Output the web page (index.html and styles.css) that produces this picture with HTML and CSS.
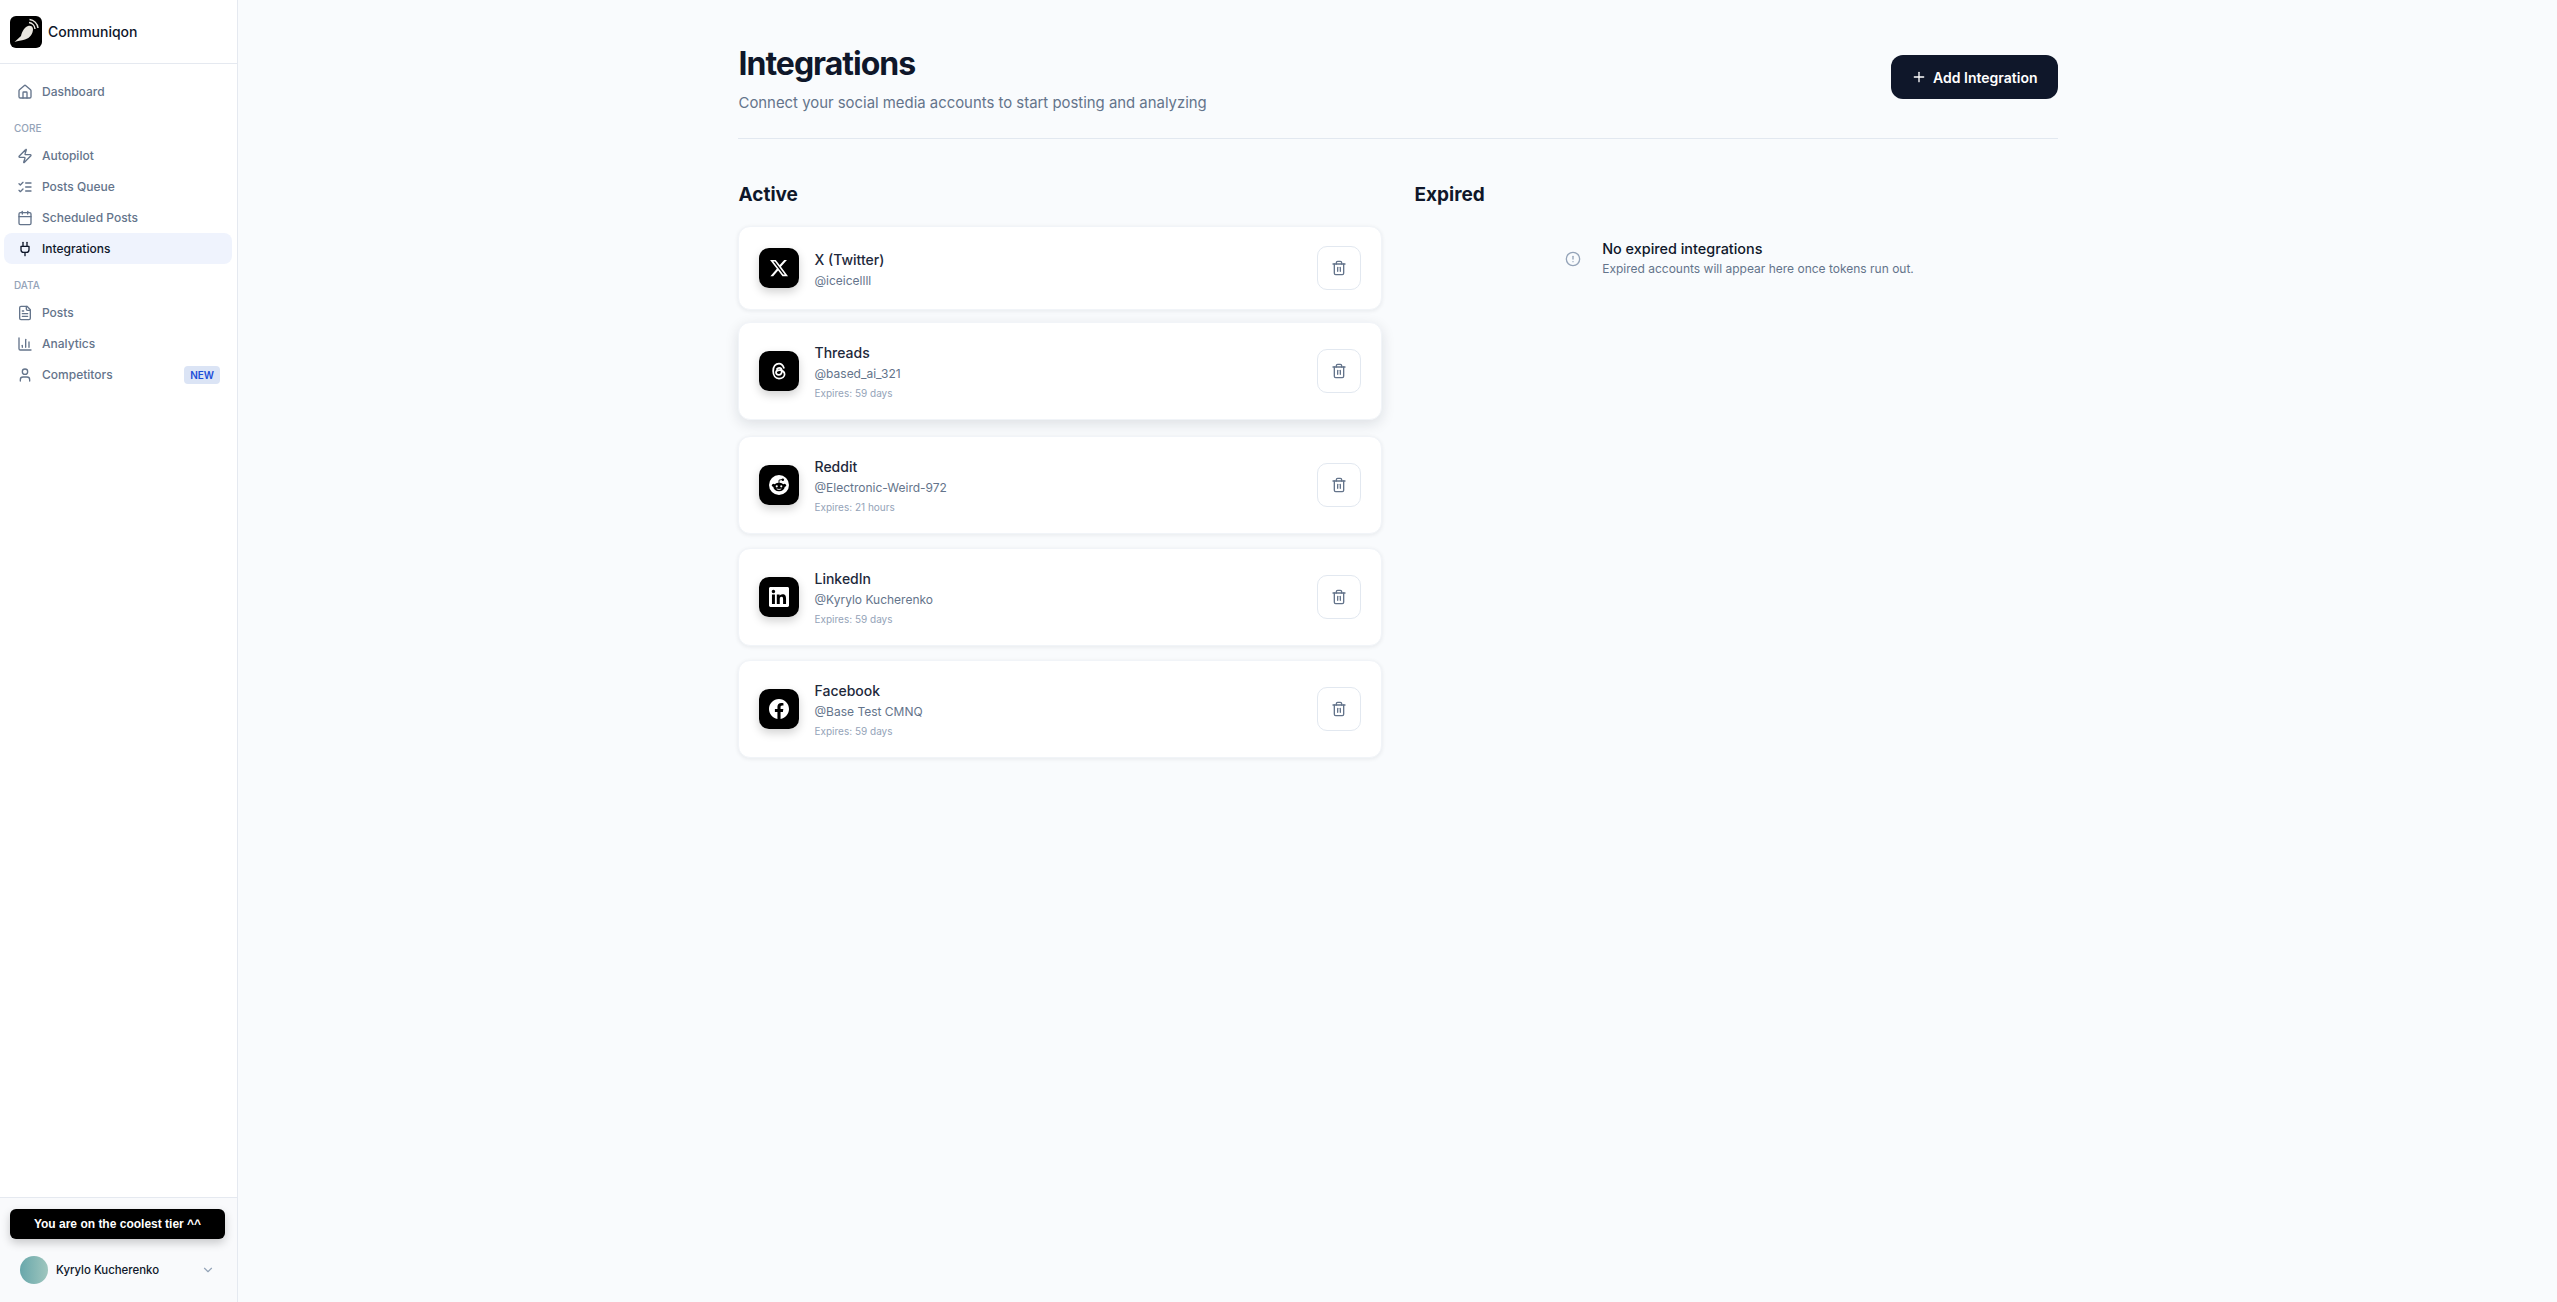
FILE: index.html
```html
<!DOCTYPE html>
<html lang="en">
  <head>
    <meta charset="UTF-8" />
    <meta name="viewport" content="width=device-width, initial-scale=1.0" />
    <title>Integrations</title>
    <link rel="stylesheet" href="styles.css">
  </head>
  <body>
    <aside class="sidebar">
      <div class="brand">
        <span class="brand-logo">
          <svg viewBox="0 0 32 32" width="32" height="32" fill="none">
            <path d="M4.5 26 L11 20 C12 15 15 11 18 10 C20 9 23 10 23 13 C23 18 20 22 15 23.5 C11 24.5 8 25 4.5 26 Z" fill="#e9e6df" />
            <path d="M19 6.5 A7 7 0 0 1 25 13 M19.5 3.5 A10 10 0 0 1 28 12" stroke="#e9e6df" stroke-width="1.5" />
          </svg>
        </span>
        <span class="brand-name">Communiqon</span>
      </div>

      <nav class="nav">
        <a class="nav-item">
          <svg class="icon" viewBox="0 0 24 24"><path d="M15 21v-8a1 1 0 0 0-1-1h-4a1 1 0 0 0-1 1v8" /><path d="M3 10a2 2 0 0 1 .709-1.528l7-5.999a2 2 0 0 1 2.582 0l7 5.999A2 2 0 0 1 21 10v9a2 2 0 0 1-2 2H5a2 2 0 0 1-2-2z" /></svg>
          Dashboard
        </a>

        <div class="nav-label">CORE</div>
        <a class="nav-item">
          <svg class="icon" viewBox="0 0 24 24"><path d="M4 14a1 1 0 0 1-.78-1.63l9.9-10.2a.5.5 0 0 1 .86.46l-1.92 6.02A1 1 0 0 0 13 10h7a1 1 0 0 1 .78 1.63l-9.9 10.2a.5.5 0 0 1-.86-.46l1.92-6.02A1 1 0 0 0 11 14z" /></svg>
          Autopilot
        </a>
        <a class="nav-item">
          <svg class="icon" viewBox="0 0 24 24"><path d="M3 7l2 2 4-4" /><path d="M3 17l2 2 4-4" /><path d="M13 6h8" /><path d="M13 12h8" /><path d="M13 18h8" /></svg>
          Posts Queue
        </a>
        <a class="nav-item">
          <svg class="icon" viewBox="0 0 24 24"><path d="M8 2v4" /><path d="M16 2v4" /><rect width="18" height="18" x="3" y="4" rx="2" /><path d="M3 10h18" /></svg>
          Scheduled Posts
        </a>
        <a class="nav-item nav-item-active">
          <svg class="icon" viewBox="0 0 24 24"><path d="M12 22v-5" /><path d="M9 8V2" /><path d="M15 8V2" /><path d="M18 8v5a4 4 0 0 1-4 4h-4a4 4 0 0 1-4-4V8Z" /></svg>
          Integrations
        </a>

        <div class="nav-label">DATA</div>
        <a class="nav-item">
          <svg class="icon" viewBox="0 0 24 24"><path d="M15 2H6a2 2 0 0 0-2 2v16a2 2 0 0 0 2 2h12a2 2 0 0 0 2-2V7Z" /><path d="M14 2v4a2 2 0 0 0 2 2h4" /><path d="M10 9H8" /><path d="M16 13H8" /><path d="M16 17H8" /></svg>
          Posts
        </a>
        <a class="nav-item">
          <svg class="icon" viewBox="0 0 24 24"><path d="M3 3v16a2 2 0 0 0 2 2h16" /><path d="M18 17V9" /><path d="M13 17V5" /><path d="M8 17v-3" /></svg>
          Analytics
        </a>
        <a class="nav-item">
          <svg class="icon" viewBox="0 0 24 24"><path d="M19 21v-2a4 4 0 0 0-4-4H9a4 4 0 0 0-4 4v2" /><circle cx="12" cy="7" r="4" /></svg>
          Competitors
          <span class="badge">NEW</span>
        </a>
      </nav>

      <div class="sidebar-footer">
        <div class="tier">You are on the coolest tier ^^</div>
        <div class="user">
          <span class="avatar"></span>
          <span class="user-name">Kyrylo Kucherenko</span>
          <svg class="chevron" viewBox="0 0 24 24"><path d="m6 9 6 6 6-6" /></svg>
        </div>
      </div>
    </aside>

    <main class="main">
      <div class="content">
        <header class="page-header">
          <div>
            <h1>Integrations</h1>
            <p class="subtitle">Connect your social media accounts to start posting and analyzing</p>
          </div>
          <button class="add-button">
            <svg class="plus" viewBox="0 0 24 24"><path d="M5 12h14" /><path d="M12 5v14" /></svg>
            Add Integration
          </button>
        </header>

        <div class="columns">
          <section>
            <h2>Active</h2>
            <div class="card-list">
              <div class="card">
                <span class="platform">
                  <svg viewBox="0 0 24 24" width="20" height="20" fill="#fff"><path d="M18.244 2.25h3.308l-7.227 8.26 8.502 11.24H16.17l-5.214-6.817L4.99 21.75H1.68l7.73-8.835L1.254 2.25H8.08l4.713 6.231zm-1.161 17.52h1.833L7.084 4.126H5.117z" /></svg>
                </span>
                <div class="card-text">
                  <div class="card-name">X (Twitter)</div>
                  <div class="card-handle">@iceicellll</div>
                </div>
                <button class="delete">
                  <svg class="icon" viewBox="0 0 24 24"><path d="M3 6h18" /><path d="M19 6v14a2 2 0 0 1-2 2H7a2 2 0 0 1-2-2V6" /><path d="M8 6V4a2 2 0 0 1 2-2h4a2 2 0 0 1 2 2v2" /><path d="M10 11v6" /><path d="M14 11v6" /></svg>
                </button>
              </div>

              <div class="card card-hover">
                <span class="platform">
                  <svg viewBox="0 0 24 24" width="20" height="20" fill="none" stroke="#fff" stroke-width="2.1" stroke-linecap="round"><path d="M17.8 8.2C16.8 5 14.7 3 12 3 7.8 3 5 6.5 5 12s2.8 9 7 9c3.8 0 6.7-2.2 6.7-5.2 0-3-2.7-4.8-6.2-4.8-2.5 0-4.1 1.2-4.1 2.9 0 1.6 1.4 2.7 3.2 2.7 2.4 0 3.8-1.7 3.8-4.6 0-2.3-1.3-3.7-3.2-3.7-1.2 0-2.1.5-2.7 1.4" /></svg>
                </span>
                <div class="card-text">
                  <div class="card-name">Threads</div>
                  <div class="card-handle">@based_ai_321</div>
                  <div class="card-expires">Expires: 59 days</div>
                </div>
                <button class="delete">
                  <svg class="icon" viewBox="0 0 24 24"><path d="M3 6h18" /><path d="M19 6v14a2 2 0 0 1-2 2H7a2 2 0 0 1-2-2V6" /><path d="M8 6V4a2 2 0 0 1 2-2h4a2 2 0 0 1 2 2v2" /><path d="M10 11v6" /><path d="M14 11v6" /></svg>
                </button>
              </div>

              <div class="card">
                <span class="platform">
                  <svg viewBox="0 0 24 24" width="20" height="20">
                    <circle cx="12" cy="12" r="12" fill="#fff" />
                    <circle cx="5.4" cy="12.4" r="1.9" fill="#000" />
                    <circle cx="18.6" cy="12.4" r="1.9" fill="#000" />
                    <ellipse cx="12" cy="14.4" rx="6.8" ry="5" fill="#000" />
                    <circle cx="9.3" cy="13.6" r="1.3" fill="#fff" />
                    <circle cx="14.7" cy="13.6" r="1.3" fill="#fff" />
                    <path d="M9.3 16.6c1.6 1 3.8 1 5.4 0" stroke="#fff" stroke-width="1" fill="none" />
                    <path d="M12 10V6.2l3.6-.8" stroke="#000" stroke-width="1.1" fill="none" />
                    <circle cx="16.6" cy="5.6" r="1.5" fill="#000" />
                  </svg>
                </span>
                <div class="card-text">
                  <div class="card-name">Reddit</div>
                  <div class="card-handle">@Electronic-Weird-972</div>
                  <div class="card-expires">Expires: 21 hours</div>
                </div>
                <button class="delete">
                  <svg class="icon" viewBox="0 0 24 24"><path d="M3 6h18" /><path d="M19 6v14a2 2 0 0 1-2 2H7a2 2 0 0 1-2-2V6" /><path d="M8 6V4a2 2 0 0 1 2-2h4a2 2 0 0 1 2 2v2" /><path d="M10 11v6" /><path d="M14 11v6" /></svg>
                </button>
              </div>

              <div class="card">
                <span class="platform">
                  <svg viewBox="0 0 24 24" width="20" height="20" fill="#fff"><path d="M20.447 20.452h-3.554v-5.569c0-1.328-.027-3.037-1.852-3.037-1.853 0-2.136 1.445-2.136 2.939v5.667H9.351V9h3.414v1.561h.046c.477-.9 1.637-1.85 3.37-1.85 3.601 0 4.267 2.37 4.267 5.455v6.286zM5.337 7.433c-1.144 0-2.063-.926-2.063-2.065 0-1.138.92-2.063 2.063-2.063 1.14 0 2.064.925 2.064 2.063 0 1.139-.925 2.065-2.064 2.065zm1.782 13.019H3.555V9h3.564v11.452zM22.225 0H1.771C.792 0 0 .774 0 1.729v20.542C0 23.227.792 24 1.771 24h20.451C23.2 24 24 23.227 24 22.271V1.729C24 .774 23.2 0 22.222 0h.003z" /></svg>
                </span>
                <div class="card-text">
                  <div class="card-name">LinkedIn</div>
                  <div class="card-handle">@Kyrylo Kucherenko</div>
                  <div class="card-expires">Expires: 59 days</div>
                </div>
                <button class="delete">
                  <svg class="icon" viewBox="0 0 24 24"><path d="M3 6h18" /><path d="M19 6v14a2 2 0 0 1-2 2H7a2 2 0 0 1-2-2V6" /><path d="M8 6V4a2 2 0 0 1 2-2h4a2 2 0 0 1 2 2v2" /><path d="M10 11v6" /><path d="M14 11v6" /></svg>
                </button>
              </div>

              <div class="card">
                <span class="platform">
                  <svg viewBox="0 0 24 24" width="20" height="20" fill="#fff"><path d="M24 12.073c0-6.627-5.373-12-12-12s-12 5.373-12 12c0 5.99 4.388 10.954 10.125 11.854v-8.385H7.078v-3.47h3.047V9.43c0-3.007 1.792-4.669 4.533-4.669 1.312 0 2.686.235 2.686.235v2.953H15.83c-1.491 0-1.956.925-1.956 1.874v2.25h3.328l-.532 3.47h-2.796v8.385C19.612 23.027 24 18.062 24 12.073z" /></svg>
                </span>
                <div class="card-text">
                  <div class="card-name">Facebook</div>
                  <div class="card-handle">@Base Test CMNQ</div>
                  <div class="card-expires">Expires: 59 days</div>
                </div>
                <button class="delete">
                  <svg class="icon" viewBox="0 0 24 24"><path d="M3 6h18" /><path d="M19 6v14a2 2 0 0 1-2 2H7a2 2 0 0 1-2-2V6" /><path d="M8 6V4a2 2 0 0 1 2-2h4a2 2 0 0 1 2 2v2" /><path d="M10 11v6" /><path d="M14 11v6" /></svg>
                </button>
              </div>
            </div>
          </section>

          <section>
            <h2>Expired</h2>
            <div class="empty">
              <span class="empty-icon">
                <svg viewBox="0 0 24 24"><circle cx="12" cy="12" r="10" /><path d="M12 8v4" /><path d="M12 16h.01" /></svg>
              </span>
              <div>
                <div class="empty-title">No expired integrations</div>
                <div class="empty-text">Expired accounts will appear here once tokens run out.</div>
              </div>
            </div>
          </section>
        </div>
      </div>
    </main>
  </body>
</html>
```

FILE: styles.css
```css
* {
  box-sizing: border-box;
}
body {
  margin: 0;
  height: 100vh;
  display: flex;
  overflow: hidden;
  background-color: #f9fbfd;
  color: #0f172a;
  font-family: Inter, "Noto Sans", sans-serif;
}
svg {
  display: block;
}

/* sidebar */
.sidebar {
  width: 238px;
  flex-shrink: 0;
  display: flex;
  flex-direction: column;
  background-color: #fff;
  border-right: 1px solid #e5e9f0;
}
.brand {
  height: 64px;
  display: flex;
  align-items: center;
  gap: 6px;
  padding: 0 10px;
  border-bottom: 1px solid #e5e9f0;
}
.brand-logo {
  width: 32px;
  height: 32px;
  border-radius: 6px;
  background-color: #000;
}
.brand-name {
  font-size: 14px;
  font-weight: 500;
}
.nav {
  flex: 1;
  padding: 12px 5px 0 4px;
}
.nav-item {
  height: 31px;
  display: flex;
  align-items: center;
  gap: 9px;
  padding: 0 13px;
  border-radius: 8px;
  font-size: 12px;
  font-weight: 500;
  color: #64748b;
}
.nav-item-active {
  background-color: #eff3fd;
  color: #0f172a;
}
.nav-label {
  height: 33px;
  padding: 13px 10px 0;
  font-size: 10px;
  font-weight: 500;
  line-height: 16px;
  color: #94a3b8;
}
.icon {
  width: 16px;
  height: 16px;
  flex-shrink: 0;
  fill: none;
  stroke: currentColor;
  stroke-width: 2;
  stroke-linecap: round;
  stroke-linejoin: round;
}
.badge {
  margin-left: auto;
  margin-right: -1px;
  padding: 0 6px;
  height: 18px;
  line-height: 18px;
  border-radius: 4px;
  background-color: #dbe4f5;
  color: #1d4ed8;
  font-size: 10px;
  font-weight: 600;
}
.sidebar-footer {
  height: 105px;
  padding: 11px 12px 0 10px;
  background-color: #f9fafc;
  border-top: 1px solid #e5e9f0;
}
.tier {
  height: 30px;
  line-height: 30px;
  border-radius: 6px;
  background-color: #000;
  box-shadow: 0 4px 10px rgba(0, 0, 0, 0.2);
  color: #fff;
  text-align: center;
  font-family: "Liberation Sans", sans-serif;
  font-size: 12px;
  font-weight: 700;
}
.user {
  display: flex;
  align-items: center;
  gap: 8px;
  margin-top: 17px;
  padding: 0 10px;
}
.avatar {
  width: 28px;
  height: 28px;
  border-radius: 50%;
  background: linear-gradient(90deg, #68a7ab, #9fc6be);
}
.user-name {
  font-size: 11.4px;
  font-weight: 500;
}
.chevron {
  width: 14px;
  height: 14px;
  margin-left: auto;
  fill: none;
  stroke: #94a3b8;
  stroke-width: 2;
  stroke-linecap: round;
  stroke-linejoin: round;
}

/* main */
.main {
  flex: 1;
}
.content {
  width: 1320px;
  margin: 0 auto;
}
.page-header {
  height: 139px;
  display: flex;
  justify-content: space-between;
  padding-top: 42px;
  padding-left: 1px;
  border-bottom: 1px solid #e2e8f0;
}
h1 {
  margin: 0;
  font-size: 32px;
  font-weight: 700;
  line-height: 44px;
  letter-spacing: -1px;
}
.subtitle {
  margin: 5px 0 0;
  font-size: 14.9px;
  line-height: 24px;
  color: #64748b;
}
.add-button {
  height: 44px;
  margin-top: 13px;
  padding: 0 20px;
  display: flex;
  align-items: center;
  gap: 6px;
  border: none;
  border-radius: 12px;
  background-color: #0f172a;
  color: #fff;
  font-family: inherit;
  font-size: 14px;
  font-weight: 600;
}
.plus {
  width: 16px;
  height: 16px;
  fill: none;
  stroke: #fff;
  stroke-width: 2;
  stroke-linecap: round;
}
.columns {
  display: grid;
  grid-template-columns: 1fr 1fr;
  gap: 32px;
  padding-top: 40px;
}
h2 {
  margin: 0 0 15px 1px;
  font-size: 19px;
  font-weight: 700;
  line-height: 32px;
}
.card-list {
  display: flex;
  flex-direction: column;
  gap: 14px;
}
.card {
  min-height: 84px;
  display: flex;
  align-items: center;
  gap: 16px;
  padding: 16px 20px;
  background-color: #fff;
  border: 1px solid #f1f4f8;
  border-radius: 12px;
  box-shadow: 0 1px 4px rgba(15, 23, 42, 0.08);
}
.card-hover {
  transform: translateY(-2px);
  box-shadow: 0 4px 14px rgba(15, 23, 42, 0.12);
}
.platform {
  width: 40px;
  height: 40px;
  flex-shrink: 0;
  display: flex;
  align-items: center;
  justify-content: center;
  border-radius: 10px;
  background-color: #000;
  box-shadow: 0 4px 10px rgba(0, 0, 0, 0.18);
}
.card-text {
  flex: 1;
  padding-top: 3px;
}
.card-name {
  font-size: 14px;
  font-weight: 500;
  line-height: 21px;
  color: #1e293b;
}
.card-handle {
  font-size: 12px;
  line-height: 21px;
  color: #64748b;
}
.card-expires {
  font-size: 10px;
  line-height: 19px;
  color: #94a3b8;
}
.delete {
  width: 44px;
  height: 44px;
  flex-shrink: 0;
  display: flex;
  align-items: center;
  justify-content: center;
  padding: 0;
  background-color: #fff;
  border: 1px solid #e2e8f0;
  border-radius: 10px;
  color: #64748b;
}
.empty {
  display: flex;
  align-items: center;
  justify-content: center;
  gap: 13px;
  padding-top: 13px;
}
.empty-icon {
  width: 32px;
  display: flex;
  justify-content: center;
}
.empty-icon svg {
  width: 16px;
  height: 16px;
  fill: none;
  stroke: #94a3b8;
  stroke-width: 2;
  stroke-linecap: round;
}
.empty-title {
  font-size: 14.4px;
  font-weight: 500;
  line-height: 20px;
}
.empty-text {
  font-size: 12px;
  line-height: 20px;
  color: #64748b;
}
```
